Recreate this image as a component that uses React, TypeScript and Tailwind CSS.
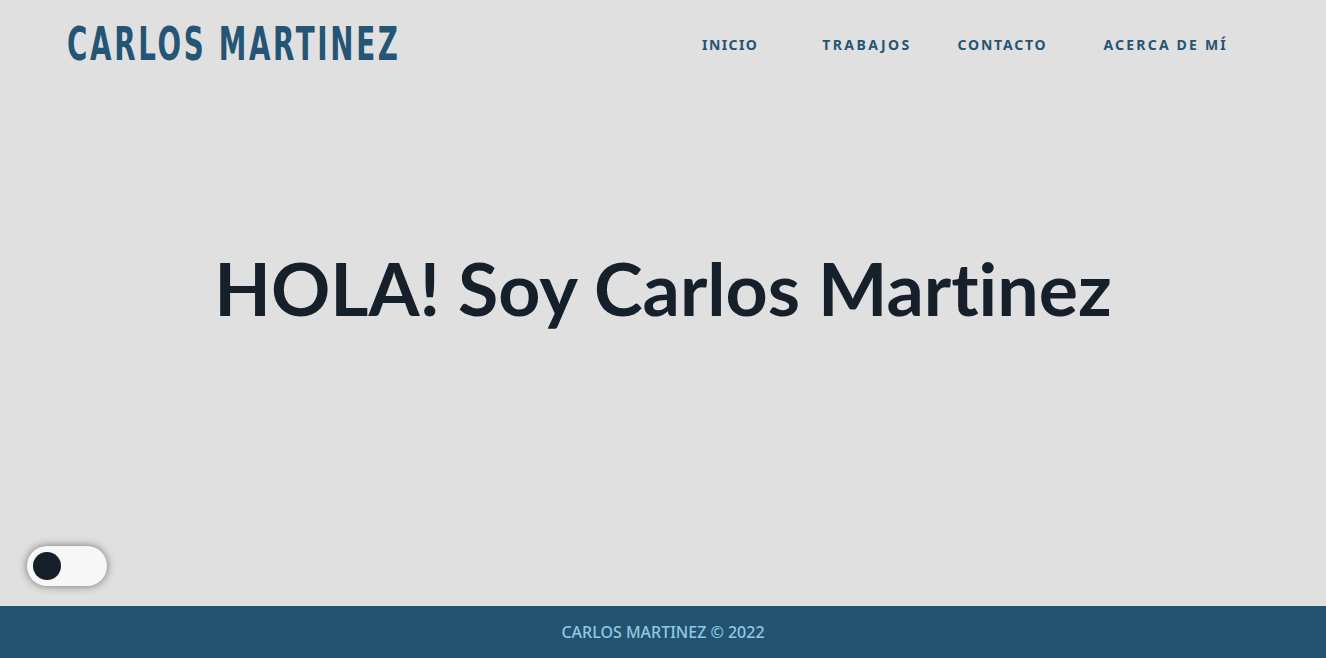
export default function App() {
  const links = [
    { label: "INICIO", className: "tracking-[1.4px]" },
    { label: "TRABAJOS", className: "ml-[64px] tracking-[2.4px]" },
    { label: "CONTACTO", className: "ml-[46px] tracking-[1.8px]" },
    { label: "ACERCA DE MÍ", className: "ml-[56px] tracking-[2.2px]" },
  ];

  return (
    <div className="min-h-screen flex flex-col bg-[#e0e0e0] font-['Noto_Sans',sans-serif]">
      {/* Header */}
      <header className="flex items-center justify-between h-[88px] pl-[67px] pr-[98px]">
        <h1 className="inline-block origin-left scale-x-[0.67] text-[46px] font-bold tracking-[4px] text-[#255574] leading-none font-['Liberation_Sans_Narrow','DejaVu_Sans_Condensed',sans-serif]">
          CARLOS MARTINEZ
        </h1>
        <nav className="flex items-center">
          {links.map((link) => (
            <a
              key={link.label}
              href="#"
              className={`text-[14px] font-bold text-[#255574] ${link.className}`}
            >
              {link.label}
            </a>
          ))}
        </nav>
      </header>

      {/* Hero */}
      <main className="flex-1 flex justify-center pt-[163px]">
        <h2 className="text-[73.5px] font-bold text-[#16202a] leading-none [font-variant-ligatures:none] font-['Lato',sans-serif]">
          HOLA! Soy Carlos Martinez
        </h2>
      </main>

      {/* Theme toggle */}
      <button
        className="fixed left-[27px] bottom-[72px] w-[80px] h-[40px] rounded-full bg-[#f7f7f7] shadow-[0_0_8px_rgba(0,0,0,0.5)] flex items-center px-[6px]"
        aria-label="Cambiar tema"
      >
        <span className="w-[28px] h-[28px] rounded-full bg-[#16202a]" />
      </button>

      {/* Footer */}
      <footer className="h-[52px] bg-[#245370] flex items-center justify-center">
        <p className="text-[16px] font-medium text-[#8ecae6]">CARLOS MARTINEZ © 2022</p>
      </footer>
    </div>
  );
}
